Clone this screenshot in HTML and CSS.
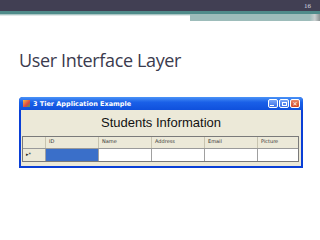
FILE: index.html
```html
<!DOCTYPE html>
<html>
<head>
<meta charset="utf-8">
<link rel="stylesheet" href="styles.css">
</head>
<body>
<div class="slide">
  <div class="topbar"><span class="pnum">16</span></div>
  <div class="teal"></div>
  <div class="bands">
    <div class="band-left"></div>
    <div class="band-right"></div>
  </div>
  <h1 class="title">User Interface Layer</h1>
  <div class="win">
    <div class="titlebar">
      <span class="appicon"></span>
      <span class="wtitle">3 Tier Application Example</span>
      <span class="btns">
        <span class="btn"><span class="minbar"></span></span>
        <span class="btn"><span class="maxbox"></span></span>
        <span class="btn close">✕</span>
      </span>
    </div>
    <div class="client">
      <div class="heading">Students Information</div>
      <div class="grid">
        <div class="row head">
          <div class="c rh"></div>
          <div class="c w1">ID</div>
          <div class="c w2">Name</div>
          <div class="c w3">Address</div>
          <div class="c w4">Email</div>
          <div class="c w5">Picture</div>
        </div>
        <div class="row data">
          <div class="c rh">▸*</div>
          <div class="c w1 sel"></div>
          <div class="c w2"></div>
          <div class="c w3"></div>
          <div class="c w4"></div>
          <div class="c w5"></div>
        </div>
      </div>
    </div>
  </div>
</div>
</body>
</html>
```
FILE: styles.css
```css
html, body { margin: 0; padding: 0; background: #fff; }
.slide { width: 320px; height: 240px; overflow: hidden; position: relative; }
.topbar { height: 11px; background: #413f53; position: relative; }
.pnum { position: absolute; right: 9px; top: 2px; font: 7px "Liberation Serif", serif; color: #d8d8e0; }
.teal { height: 3px; background: #4f8b8a; }
.bands { display: flex; height: 7px; }
.band-left { width: 190px; background: linear-gradient(#a9c6c4 0, #a9c6c4 1px, #dfe8e8 1px, #dfe8e8 2px, #fff 2px); }
.band-right { flex: 1; background: linear-gradient(90deg, #9dbcba 0, #9dbcba 92%, #c9cfd0 96%, #8a9293 100%); }
.title { margin: 28px 0 0 19px; font: 400 18px "Open Sans", sans-serif; color: #3b3b4e; line-height: 22px; height: 22px; letter-spacing: -0.35px; }
.win { margin: 26px 0 0 19px; width: 284px; height: 71px; background: #0a3fd6; border-radius: 4px 4px 0 0; box-sizing: border-box; padding: 0 2px 2px 2px; display: flex; flex-direction: column; }
.titlebar { height: 13px; display: flex; align-items: center; background: linear-gradient(#4a93f7, #1a60e8 40%, #0f50dc); margin: 0 -2px; padding: 0 3px 0 4px; border-radius: 4px 4px 0 0; }
.appicon { width: 7px; height: 7px; background: linear-gradient(135deg, #f4c040, #d44 60%, #3a6); margin-right: 3px; }
.wtitle { font: bold 6.5px "DejaVu Sans", sans-serif; color: #fff; flex: 1; white-space: nowrap; }
.btns { display: flex; gap: 1px; }
.btn { width: 10px; height: 9px; border: 1px solid #fff; border-radius: 2px; box-sizing: border-box; background: linear-gradient(#7aa6f7, #3a6fe8); display: flex; align-items: center; justify-content: center; }
.btn.close { background: linear-gradient(#e98a6a, #d2451f); color: #fff; font: bold 6px "DejaVu Sans", sans-serif; line-height: 1; }
.minbar { width: 4px; height: 1px; background: #fff; margin-top: 4px; margin-right: 2px; }
.maxbox { width: 5px; height: 4px; border: 1px solid #fff; border-top-width: 1.5px; box-sizing: border-box; }
.client { flex: 1; background: #ece9d8; display: flex; flex-direction: column; padding: 0 3px 0 1px; }
.heading { text-align: center; font: 13px "Liberation Sans", sans-serif; color: #111; height: 26px; line-height: 25px; padding-left: 2px; }
.grid { border: 1px solid #7a7a7a; background: #808080; width: 275px; display: flex; flex-direction: column; }
.row { display: flex; }
.head { height: 11px; background: #ece9d8; }
.data { height: 12px; border-top: 1px solid #9a9a9a; background: #fff; }
.c { box-sizing: border-box; border-right: 1px solid #a0a0a0; font: 5px "DejaVu Sans", sans-serif; color: #333; padding-left: 3px; line-height: 9px; }
.head .c { border-right-color: #c8c4b0; }
.rh { width: 23px; background: #ece9d8; }
.data .rh { font-size: 5px; color: #222; line-height: 11px; }
.w1 { width: 53px; }
.w2 { width: 53px; }
.w3 { width: 53px; }
.w4 { width: 53px; }
.w5 { flex: 1; border-right: 0; }
.sel { background: #3a6fc9; }
```
